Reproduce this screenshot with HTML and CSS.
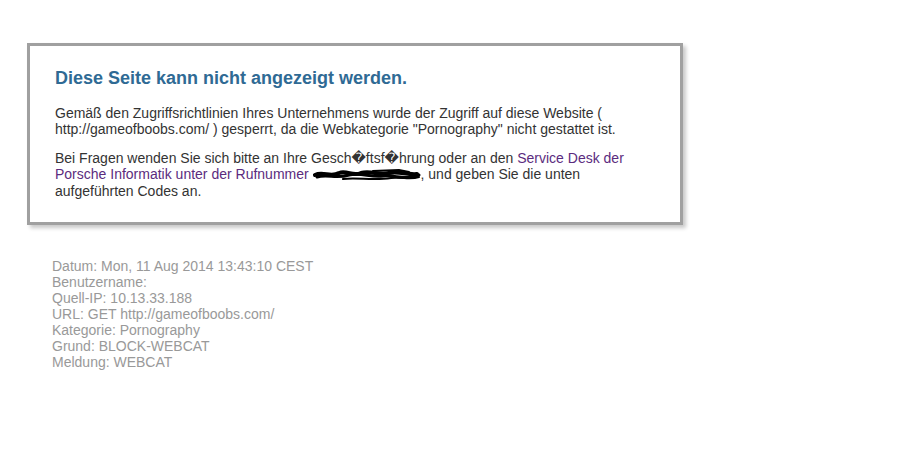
FILE: index.html
```html
<!DOCTYPE html>
<html lang="de">
<head>
    <meta charset="UTF-8">
    <title>Diese Seite kann nicht angezeigt werden.</title>
    <link rel="stylesheet" href="styles.css">
</head>
<body>
    <div class="block-box">
        <h1>Diese Seite kann nicht angezeigt werden.</h1>
        <p>Gemäß den Zugriffsrichtlinien Ihres Unternehmens wurde der Zugriff auf diese Website ( http://gameofboobs.com/ ) gesperrt, da die Webkategorie "Pornography" nicht gestattet ist.</p>
        <p>Bei Fragen wenden Sie sich bitte an Ihre Gesch&#xFFFD;ftsf&#xFFFD;hrung oder an den <a href="#">Service Desk der Porsche Informatik unter der Rufnummer</a> <span class="redacted"><svg width="108" height="16" viewBox="0 0 108 16"><path d="M2 8 C10 4 18 11 26 6 C34 3 40 10 48 6 C58 3 66 9 76 6 C86 4 94 8 104 7" stroke="#000" stroke-width="4" fill="none" stroke-linecap="round"/><path d="M4 10 C14 7 24 12 36 8 C48 5 58 11 70 9 C80 8 90 12 100 10 L106 8" stroke="#000" stroke-width="3" fill="none" stroke-linecap="round"/><path d="M30 12 C44 10 60 14 78 11 C90 10 98 13 106 10" stroke="#000" stroke-width="2" fill="none" stroke-linecap="round"/><path d="M60 4 L86 3 L96 5" stroke="#000" stroke-width="2" fill="none" stroke-linecap="round"/></svg></span>, und geben Sie die unten aufgeführten Codes an.</p>
    </div>

    <div class="details">
        Datum: Mon, 11 Aug 2014 13:43:10 CEST<br>
        Benutzername:<br>
        Quell-IP: 10.13.33.188<br>
        URL: GET http://gameofboobs.com/<br>
        Kategorie: Pornography<br>
        Grund: BLOCK-WEBCAT<br>
        Meldung: WEBCAT
    </div>
</body>
</html>
```

FILE: styles.css
```css
body {
    margin: 0;
    padding: 43px 0 0 27px;
    background-color: #fff;
    font-family: "Liberation Sans", Arial, "DejaVu Sans", sans-serif;
    font-size: 14px;
    line-height: 16px;
    color: #333;
}

.block-box {
    width: 599px;
    padding: 22px 26px 23px 25px;
    border: 3px solid #a0a0a0;
    box-shadow: 3px 3px 4px #c8c8c8;
    background-color: #fff;
}

h1 {
    margin: 0 0 17px 0;
    font-size: 18px;
    line-height: 20px;
    font-weight: bold;
    color: #2f6a94;
}

p {
    margin: 0 0 13px 0;
}

p:last-child {
    margin-bottom: 0;
}

a {
    color: #5b2c7e;
    text-decoration: none;
}

.redacted svg {
    vertical-align: -4px;
}

.details {
    margin: 33px 0 0 25px;
    color: #999;
}
```
